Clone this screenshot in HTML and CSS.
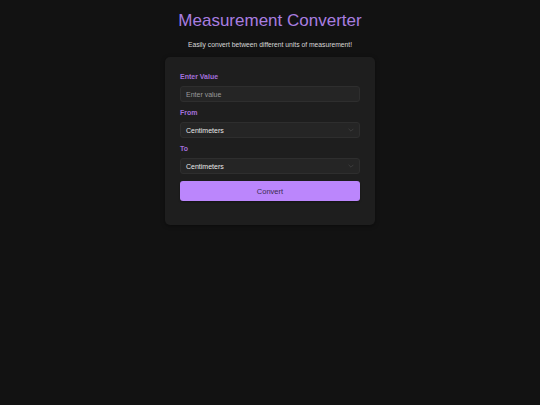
FILE: index.html
```html
<!DOCTYPE html>
<html lang="en">
<head>
<meta charset="utf-8">
<title>Measurement Converter</title>
<link rel="stylesheet" href="styles.css">
</head>
<body>
<main class="page">
  <h1 class="title">Measurement Converter</h1>
  <p class="subtitle">Easily convert between different units of measurement!</p>
  <section class="card">
    <div class="field">
      <label class="label">Enter Value</label>
      <div class="input"><span class="placeholder">Enter value</span></div>
    </div>
    <div class="field">
      <label class="label">From</label>
      <div class="input select"><span>Centimeters</span>
        <svg class="chev" viewBox="0 0 10 6" width="6" height="4"><path d="M1 1l4 4 4-4" fill="none" stroke="#3e3e3e" stroke-width="1.6"/></svg>
      </div>
    </div>
    <div class="field">
      <label class="label">To</label>
      <div class="input select"><span>Centimeters</span>
        <svg class="chev" viewBox="0 0 10 6" width="6" height="4"><path d="M1 1l4 4 4-4" fill="none" stroke="#3e3e3e" stroke-width="1.6"/></svg>
      </div>
    </div>
    <button class="btn">Convert</button>
  </section>
</main>
</body>
</html>
```

FILE: styles.css
```css
html, body {
  margin: 0;
  padding: 0;
  background: #121212;
  height: 100%;
}
body {
  font-family: "Liberation Sans", Arial, sans-serif;
  color: #e0e0e0;
}
.page {
  display: flex;
  flex-direction: column;
  align-items: center;
  padding-top: 11px;
}
.title {
  margin: 0;
  font-size: 17px;
  line-height: 20px;
  font-weight: normal;
  color: #a97ee0;
}
.subtitle {
  margin: 10px 0 0;
  font-size: 6.75px;
  line-height: 8px;
  color: #d8d8d8;
}
.card {
  margin-top: 8px;
  width: 180px;
  padding: 16px 15px 24px;
  background: #1e1e1e;
  border-radius: 5px;
  box-shadow: 0 1px 4px rgba(0,0,0,0.4);
  display: flex;
  flex-direction: column;
}
.field {
  display: flex;
  flex-direction: column;
  margin-bottom: 7px;
}
.label {
  font-size: 7px;
  line-height: 8px;
  font-weight: bold;
  color: #a470dc;
  margin-bottom: 5px;
}
.input {
  height: 16px;
  box-sizing: border-box;
  background: #252525;
  border: 1px solid #2e2e2e;
  border-radius: 3px;
  padding: 0 5px;
  display: flex;
  align-items: center;
  font-size: 7px;
  color: #e8e8e8;
}
.placeholder {
  color: #9a9a9a;
}
.select {
  justify-content: space-between;
}
.chev {
  margin-right: 0;
}
.btn {
  height: 20px;
  border: none;
  border-radius: 3px;
  background: #bb86fc;
  color: #3a2c50;
  font-family: "Liberation Sans", Arial, sans-serif;
  font-size: 7.5px;
  padding: 0;
  box-shadow: 0 1px 2px rgba(0,0,0,0.4);
}
```
